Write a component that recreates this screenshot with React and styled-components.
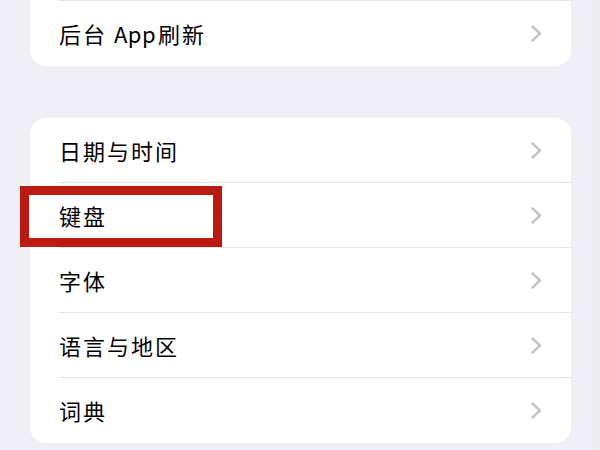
import React from 'react'
import styled, { createGlobalStyle } from 'styled-components'

const GlobalStyle = createGlobalStyle`
  html, body {
    margin: 0;
    padding: 0;
    background: #f0eff5;
  }
  body {
    font-family: "Noto Sans CJK SC", "Noto Sans", sans-serif;
    color: #000;
  }
`

// Page containers
const Screen = styled.div`
  width: 600px;
  height: 450px;
  overflow: hidden;
  background: #f0eff5;
  border-right: 8px solid #ebebf0;
  box-sizing: border-box;
`
const ScrollContent = styled.div`
  display: flex;
  flex-direction: column;
  gap: 52px;
  padding: 0 21px 0 30px;
`
const Group = styled.section`
  background: #fff;
  border-radius: ${p => (p.$cutTop ? '0 0 16px 16px' : '16px')};
`

// Row components
const Row = styled.div`
  position: relative;
  padding-left: 29px;
`
const RowInner = styled.div`
  display: flex;
  align-items: center;
  justify-content: space-between;
  height: 64px;
  padding-right: 29px;
  border-top: ${p => (p.$topRule ? '1px solid #e4e4e8' : 'none')};
  border-bottom: 1px solid ${p => (p.$last ? 'transparent' : '#e4e4e8')};
`
const Label = styled.span`
  font-size: 22px;
  letter-spacing: 2px;
  line-height: 1;
`
const Latin = styled.span`
  letter-spacing: 0.5px;
  margin-right: 2px;
`
const Chevron = styled.svg`
  width: 11px;
  height: 17px;
  margin-top: 1px;
`
const Highlight = styled.div`
  position: absolute;
  left: -10px;
  top: 3px;
  width: 202px;
  height: 61px;
  border: 9px solid #bb1a10;
  box-sizing: border-box;
  pointer-events: none;
`

const Arrow = () => (
  <Chevron viewBox="0 0 11 17">
    <polyline
      points="1.5,1.5 9,8.5 1.5,15.5"
      fill="none"
      stroke="#c4c4c7"
      strokeWidth="2.4"
      strokeLinecap="round"
      strokeLinejoin="round"
    />
  </Chevron>
)

const SettingRow = ({ label, last, topRule, highlighted }) => (
  <Row>
    <RowInner $last={last} $topRule={topRule}>
      <Label>{label}</Label>
      <Arrow />
    </RowInner>
    {highlighted && <Highlight />}
  </Row>
)

const groups = [
  {
    cutTop: true,
    rows: [{ key: 'bg', label: <>后台 <Latin>App</Latin>刷新</> }],
  },
  {
    rows: [
      { key: 'date', label: '日期与时间' },
      { key: 'kb', label: '键盘', highlighted: true },
      { key: 'font', label: '字体' },
      { key: 'lang', label: '语言与地区' },
      { key: 'dict', label: '词典' },
    ],
  },
]

const App = () => (
  <>
    <GlobalStyle />
    <Screen>
      <ScrollContent>
        {groups.map((g, gi) => (
          <Group key={gi} $cutTop={g.cutTop}>
            {g.rows.map((r, i) => (
              <SettingRow
                key={r.key}
                label={r.label}
                highlighted={r.highlighted}
                topRule={g.cutTop && i === 0}
                last={i === g.rows.length - 1}
              />
            ))}
          </Group>
        ))}
      </ScrollContent>
    </Screen>
  </>
)

export default App
